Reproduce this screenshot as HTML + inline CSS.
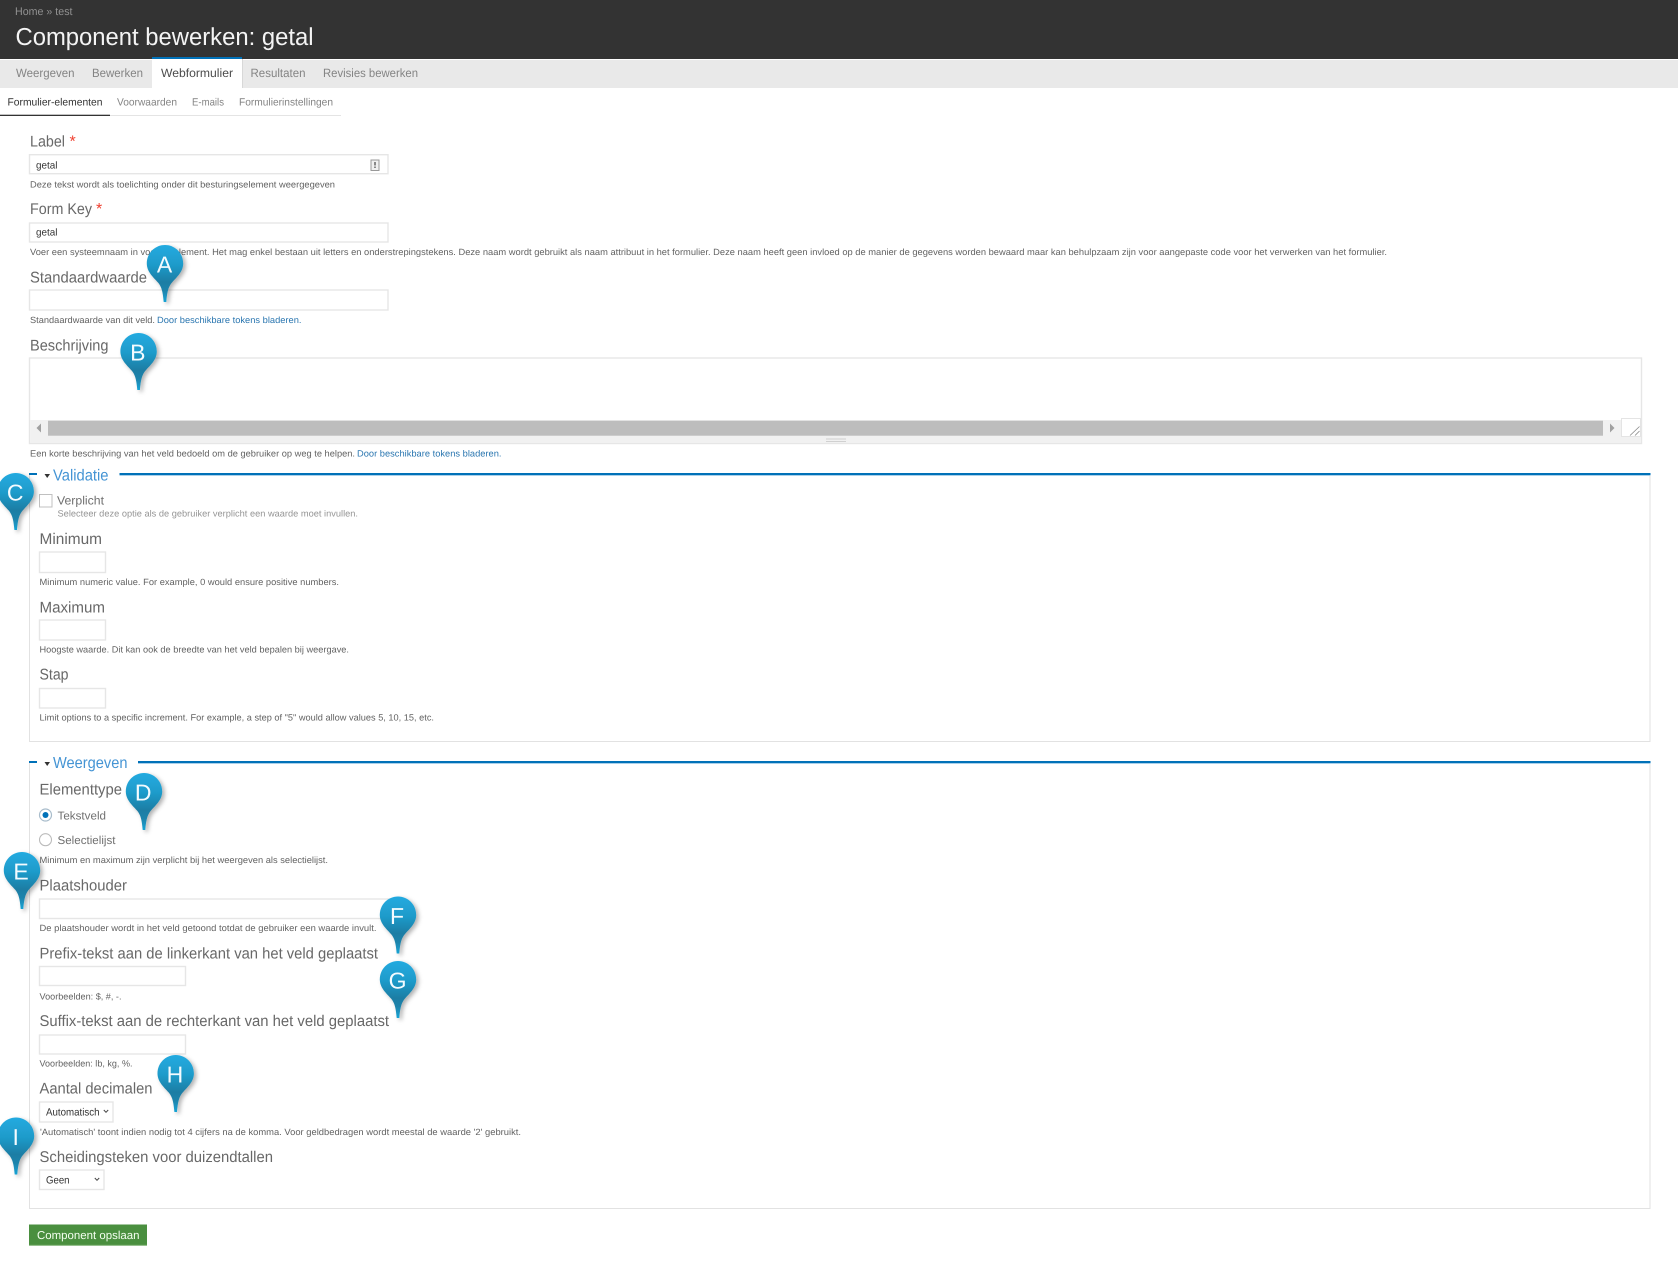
<!DOCTYPE html>
<html lang="nl"><head><meta charset="utf-8"><title>Component bewerken: getal</title>
<style>
html,body{margin:0;padding:0;background:#fff;width:1678px;height:1280px;overflow:hidden}
#hb{position:absolute;left:0;top:0;width:1678px;height:58px;background:#333}
#tb{position:absolute;left:0;top:61px;width:1678px;height:26px;background:#e9e9e9}
svg{display:block;position:absolute;left:0;top:0;filter:blur(.3px)}
text{font-family:"Liberation Sans",sans-serif;text-rendering:geometricPrecision}
.lb{font-size:15.5px;fill:#686868}
.d{font-size:9px;fill:#626262}
.l{font-size:9px;fill:#2a76b0}
.t{font-size:12px;fill:#848484}
.s{font-size:10.5px;fill:#848484}
.f{fill:#fff;stroke:#e6e6e6;stroke-width:1.4}
.leg{font-size:16px;fill:#4494d4}
.pl{font-size:23px;fill:#f4fbff;text-anchor:middle}
</style></head><body>
<div id="hb"></div><div id="tb"></div>
<svg width="1678" height="1280" viewBox="0 0 1678 1280" xmlns="http://www.w3.org/2000/svg">
<defs>
<linearGradient id="pg" x1="0" y1="0" x2="0" y2="57" gradientUnits="userSpaceOnUse">
<stop offset="0" stop-color="#22aae0"/><stop offset=".35" stop-color="#1f9bca"/><stop offset=".65" stop-color="#1d7da4"/><stop offset=".8" stop-color="#1c83ab"/><stop offset="1" stop-color="#18a4d6"/>
</linearGradient>
<filter id="ps" x="-40%" y="-20%" width="190%" height="150%"><feDropShadow dx="2.5" dy="2" stdDeviation="2" flood-color="#000" flood-opacity=".3"/></filter>
<path id="pin" d="M0 0C10.2 0 18.2 8.2 18.2 18.5C18.2 26.5 12 32 7 37.5C3.6 41.5 2.2 46 1.3 57L-1.3 57C-2.2 46 -3.6 41.5 -7 37.5C-12 32 -18.2 26.5 -18.2 18.5C-18.2 8.2 -10.2 0 0 0Z" fill="url(#pg)" filter="url(#ps)"/>
</defs>

<!-- header -->
<rect x="0" y="0" width="1678" height="59" fill="#333"/>
<text x="15" y="15" font-size="11" fill="#929292" textLength="57.5" lengthAdjust="spacingAndGlyphs">Home » test</text>
<text x="15.5" y="45" font-size="24.5" fill="#f4f4f4" textLength="298" lengthAdjust="spacingAndGlyphs">Component bewerken: getal</text>

<!-- tabs -->
<rect x="0" y="60" width="1678" height="28" fill="#e9e9e9"/>
<rect x="152" y="59" width="90" height="29" fill="#fff"/>
<rect x="152" y="57" width="90" height="2" fill="#0071b8"/>
<rect x="242" y="59" width="1" height="29" fill="#d8d8d8"/>
<text class="t" x="16" y="77" textLength="58.5" lengthAdjust="spacingAndGlyphs">Weergeven</text>
<text class="t" x="92" y="77" textLength="51" lengthAdjust="spacingAndGlyphs">Bewerken</text>
<text class="t" x="161" y="77" style="fill:#4c4c4c" textLength="72" lengthAdjust="spacingAndGlyphs">Webformulier</text>
<text class="t" x="250.5" y="77" textLength="55" lengthAdjust="spacingAndGlyphs">Resultaten</text>
<text class="t" x="323" y="77" textLength="95" lengthAdjust="spacingAndGlyphs">Revisies bewerken</text>

<!-- subtabs -->
<text class="s" x="7.5" y="105.3" style="fill:#333" textLength="95" lengthAdjust="spacingAndGlyphs">Formulier-elementen</text>
<text class="s" x="117" y="105.3" textLength="60" lengthAdjust="spacingAndGlyphs">Voorwaarden</text>
<text class="s" x="192" y="105.3" textLength="32" lengthAdjust="spacingAndGlyphs">E-mails</text>
<text class="s" x="239" y="105.3" textLength="94" lengthAdjust="spacingAndGlyphs">Formulierinstellingen</text>
<rect x="110" y="115" width="231" height="1" fill="#e4e4e4"/>
<rect x="0" y="114.7" width="110" height="1.3" fill="#333"/>

<!-- Label -->
<text class="lb" x="30" y="146.7" textLength="35" lengthAdjust="spacingAndGlyphs">Label</text>
<text x="69.5" y="146.7" font-size="16" fill="#f04030">*</text>
<rect class="f" x="29.5" y="154.7" width="358.5" height="19"/>
<text x="36" y="168.3" font-size="10" fill="#333" textLength="21.5" lengthAdjust="spacingAndGlyphs">getal</text>
<rect x="371" y="160" width="8" height="10.5" fill="#f0f0f0" stroke="#999" stroke-width="1"/>
<rect x="374" y="162" width="2" height="3.5" fill="#888"/><rect x="374" y="166.5" width="2" height="1.5" fill="#888"/>
<text class="d" x="30" y="187.7" textLength="305" lengthAdjust="spacingAndGlyphs">Deze tekst wordt als toelichting onder dit besturingselement weergegeven</text>

<!-- Form key -->
<text class="lb" x="30" y="214" textLength="62" lengthAdjust="spacingAndGlyphs">Form Key</text>
<text x="96" y="214" font-size="16" fill="#f04030">*</text>
<rect class="f" x="29.5" y="223" width="358.5" height="19"/>
<text x="36" y="235.7" font-size="10" fill="#333" textLength="21.5" lengthAdjust="spacingAndGlyphs">getal</text>
<text class="d" x="30" y="255" textLength="1357" lengthAdjust="spacingAndGlyphs">Voer een systeemnaam in voor dit element. Het mag enkel bestaan uit letters en onderstrepingstekens. Deze naam wordt gebruikt als naam attribuut in het formulier. Deze naam heeft geen invloed op de manier de gegevens worden bewaard maar kan behulpzaam zijn voor aangepaste code voor het verwerken van het formulier.</text>

<!-- Standaardwaarde -->
<text class="lb" x="30" y="282.5" textLength="117" lengthAdjust="spacingAndGlyphs">Standaardwaarde</text>
<rect class="f" x="29.5" y="290" width="358.5" height="20"/>
<text class="d" x="30" y="322.9" textLength="125" lengthAdjust="spacingAndGlyphs">Standaardwaarde van dit veld.</text>
<text class="l" x="157" y="322.9" textLength="144.5" lengthAdjust="spacingAndGlyphs">Door beschikbare tokens bladeren.</text>

<!-- Beschrijving -->
<text class="lb" x="30" y="350.5" textLength="78.5" lengthAdjust="spacingAndGlyphs">Beschrijving</text>
<rect class="f" x="29.5" y="358" width="1612" height="85.5"/>
<rect x="30.2" y="420" width="1610.6" height="23" fill="#f1f1f1"/>
<rect x="48" y="420.7" width="1555" height="15" fill="#bdbdbd"/>
<path d="M41 423.5L36.5 428L41 432.5Z" fill="#a0a0a0"/>
<path d="M1610 423.5L1614.5 428L1610 432.5Z" fill="#a0a0a0"/>
<rect x="826" y="438.5" width="20" height="1" fill="#d0d0d0"/><rect x="826" y="441" width="20" height="1" fill="#d0d0d0"/>
<rect x="1621.5" y="418.5" width="19" height="18" fill="#fff" stroke="#e4e4e4"/>
<path d="M1630 435.5L1639.5 426.5M1635 435.5L1639.5 431" stroke="#888" stroke-width=".8" fill="none"/>
<text class="d" x="30" y="456.7" textLength="325" lengthAdjust="spacingAndGlyphs">Een korte beschrijving van het veld bedoeld om de gebruiker op weg te helpen.</text>
<text class="l" x="357" y="456.7" textLength="144.5" lengthAdjust="spacingAndGlyphs">Door beschikbare tokens bladeren.</text>

<!-- Fieldset validatie -->
<path d="M29.5 474V741.5H1650V474" fill="none" stroke="#e2e2e2" stroke-width="1"/>
<rect x="29" y="473" width="8" height="2" fill="#0071b8"/>
<rect x="119.5" y="473" width="1531" height="2" fill="#0071b8"/>
<rect x="119.5" y="475" width="1531" height="1" fill="#a9d0ea"/>
<path d="M44.5 474H50L47.2 478Z" fill="#333"/>
<text class="leg" x="53" y="480.5" textLength="55.5" lengthAdjust="spacingAndGlyphs">Validatie</text>
<rect x="39.5" y="494.5" width="12.5" height="12.5" fill="#fff" stroke="#c0c0c0"/>
<text x="57" y="504.7" font-size="12" fill="#707070" textLength="47" lengthAdjust="spacingAndGlyphs">Verplicht</text>
<text class="d" x="57.5" y="516.7" style="fill:#959595" textLength="300.5" lengthAdjust="spacingAndGlyphs">Selecteer deze optie als de gebruiker verplicht een waarde moet invullen.</text>
<text class="lb" x="39.5" y="544" textLength="62.5" lengthAdjust="spacingAndGlyphs">Minimum</text>
<rect class="f" x="39.5" y="552" width="66" height="20.5"/>
<text class="d" x="39.5" y="585" textLength="299.5" lengthAdjust="spacingAndGlyphs">Minimum numeric value. For example, 0 would ensure positive numbers.</text>
<text class="lb" x="39.5" y="612.5" textLength="65.5" lengthAdjust="spacingAndGlyphs">Maximum</text>
<rect class="f" x="39.5" y="620" width="66" height="20"/>
<text class="d" x="39.5" y="652.3" textLength="309.5" lengthAdjust="spacingAndGlyphs">Hoogste waarde. Dit kan ook de breedte van het veld bepalen bij weergave.</text>
<text class="lb" x="39.5" y="679.7" textLength="29" lengthAdjust="spacingAndGlyphs">Stap</text>
<rect class="f" x="39.5" y="688.5" width="66" height="19.5"/>
<text class="d" x="39.5" y="720.7" textLength="394.5" lengthAdjust="spacingAndGlyphs">Limit options to a specific increment. For example, a step of "5" would allow values 5, 10, 15, etc.</text>

<!-- Fieldset weergeven -->
<path d="M29.5 762V1208.5H1650V762" fill="none" stroke="#e2e2e2" stroke-width="1"/>
<rect x="29" y="761" width="8" height="2" fill="#0071b8"/>
<rect x="138" y="761" width="1512.5" height="2" fill="#0071b8"/>
<rect x="138" y="763" width="1512.5" height="1" fill="#a9d0ea"/>
<path d="M44.5 762H50L47.2 766Z" fill="#333"/>
<text class="leg" x="53" y="768" textLength="74.5" lengthAdjust="spacingAndGlyphs">Weergeven</text>
<text class="lb" x="39.5" y="794.7" textLength="82.5" lengthAdjust="spacingAndGlyphs">Elementtype</text>
<circle cx="45.5" cy="815" r="6" fill="#fff" stroke="#a8bccb" stroke-width="1.2"/>
<circle cx="45.5" cy="815" r="3" fill="#0071b8"/>
<text x="57.5" y="819.7" font-size="11.5" fill="#707070" textLength="48.5" lengthAdjust="spacingAndGlyphs">Tekstveld</text>
<circle cx="45.5" cy="839.7" r="6" fill="#fff" stroke="#bbb" stroke-width="1.1"/>
<text x="57.5" y="844" font-size="11.5" fill="#707070" textLength="58" lengthAdjust="spacingAndGlyphs">Selectielijst</text>
<text class="d" x="39.5" y="862.9" textLength="288.5" lengthAdjust="spacingAndGlyphs">Minimum en maximum zijn verplicht bij het weergeven als selectielijst.</text>
<text class="lb" x="39.5" y="890.3" textLength="87.5" lengthAdjust="spacingAndGlyphs">Plaatshouder</text>
<rect class="f" x="39.5" y="899" width="358.5" height="19.5"/>
<text class="d" x="39.5" y="931" textLength="337" lengthAdjust="spacingAndGlyphs">De plaatshouder wordt in het veld getoond totdat de gebruiker een waarde invult.</text>
<text class="lb" x="39.5" y="958.6" textLength="338.5" lengthAdjust="spacingAndGlyphs">Prefix-tekst aan de linkerkant van het veld geplaatst</text>
<rect class="f" x="39.5" y="966.5" width="146" height="19"/>
<text class="d" x="39.5" y="999.3" textLength="82" lengthAdjust="spacingAndGlyphs">Voorbeelden: $, #, -.</text>
<text class="lb" x="39.5" y="1026" textLength="349.5" lengthAdjust="spacingAndGlyphs">Suffix-tekst aan de rechterkant van het veld geplaatst</text>
<rect class="f" x="39.5" y="1035" width="146" height="19"/>
<text class="d" x="39.5" y="1066.7" textLength="93" lengthAdjust="spacingAndGlyphs">Voorbeelden: lb, kg, %.</text>
<text class="lb" x="39.5" y="1093.7" textLength="113" lengthAdjust="spacingAndGlyphs">Aantal decimalen</text>
<rect class="f" x="39.5" y="1102" width="73.5" height="20"/>
<text x="46" y="1115.3" font-size="10.5" fill="#333" textLength="53.5" lengthAdjust="spacingAndGlyphs">Automatisch</text>
<path d="M103.8 1110L106 1112.3L108.2 1110" fill="none" stroke="#444" stroke-width="1"/>
<text class="d" x="40" y="1135" textLength="481" lengthAdjust="spacingAndGlyphs">'Automatisch' toont indien nodig tot 4 cijfers na de komma. Voor geldbedragen wordt meestal de waarde '2' gebruikt.</text>
<text class="lb" x="39.5" y="1162" textLength="233.5" lengthAdjust="spacingAndGlyphs">Scheidingsteken voor duizendtallen</text>
<rect class="f" x="39.5" y="1170" width="64.5" height="19.5"/>
<text x="46" y="1183.3" font-size="10.5" fill="#333" textLength="23.5" lengthAdjust="spacingAndGlyphs">Geen</text>
<path d="M94.8 1178L97 1180.3L99.2 1178" fill="none" stroke="#444" stroke-width="1"/>

<!-- Button -->
<rect x="29" y="1224.5" width="118" height="21" fill="#4a8f3f"/>
<rect x="29" y="1244.7" width="118" height="1" fill="#6aa55e"/>
<text x="37" y="1238.9" font-size="11.5" fill="#f4fff0" textLength="102.5" lengthAdjust="spacingAndGlyphs">Component opslaan</text>

<!-- Pins -->
<g transform="translate(165,245)"><use href="#pin"/><text class="pl" x="-.5" y="27.6">A</text></g>
<g transform="translate(138.6,333)"><use href="#pin"/><text class="pl" x="-.8" y="27.6">B</text></g>
<g transform="translate(15.7,473)"><use href="#pin"/><text class="pl" x="-.5" y="27.6">C</text></g>
<g transform="translate(144,773)"><use href="#pin"/><text class="pl" x="-.8" y="27.6">D</text></g>
<g transform="translate(22,852)"><use href="#pin"/><text class="pl" x="-1" y="27.6">E</text></g>
<g transform="translate(398,896.5)"><use href="#pin"/><text class="pl" x="-1" y="27.6">F</text></g>
<g transform="translate(398,961)"><use href="#pin"/><text class="pl" x="-.5" y="27.6">G</text></g>
<g transform="translate(175.7,1055)"><use href="#pin"/><text class="pl" x="-.8" y="27.6">H</text></g>
<g transform="translate(16,1117.5)"><use href="#pin"/><text class="pl" x="-.3" y="27.6">I</text></g>
</svg>
</body></html>
